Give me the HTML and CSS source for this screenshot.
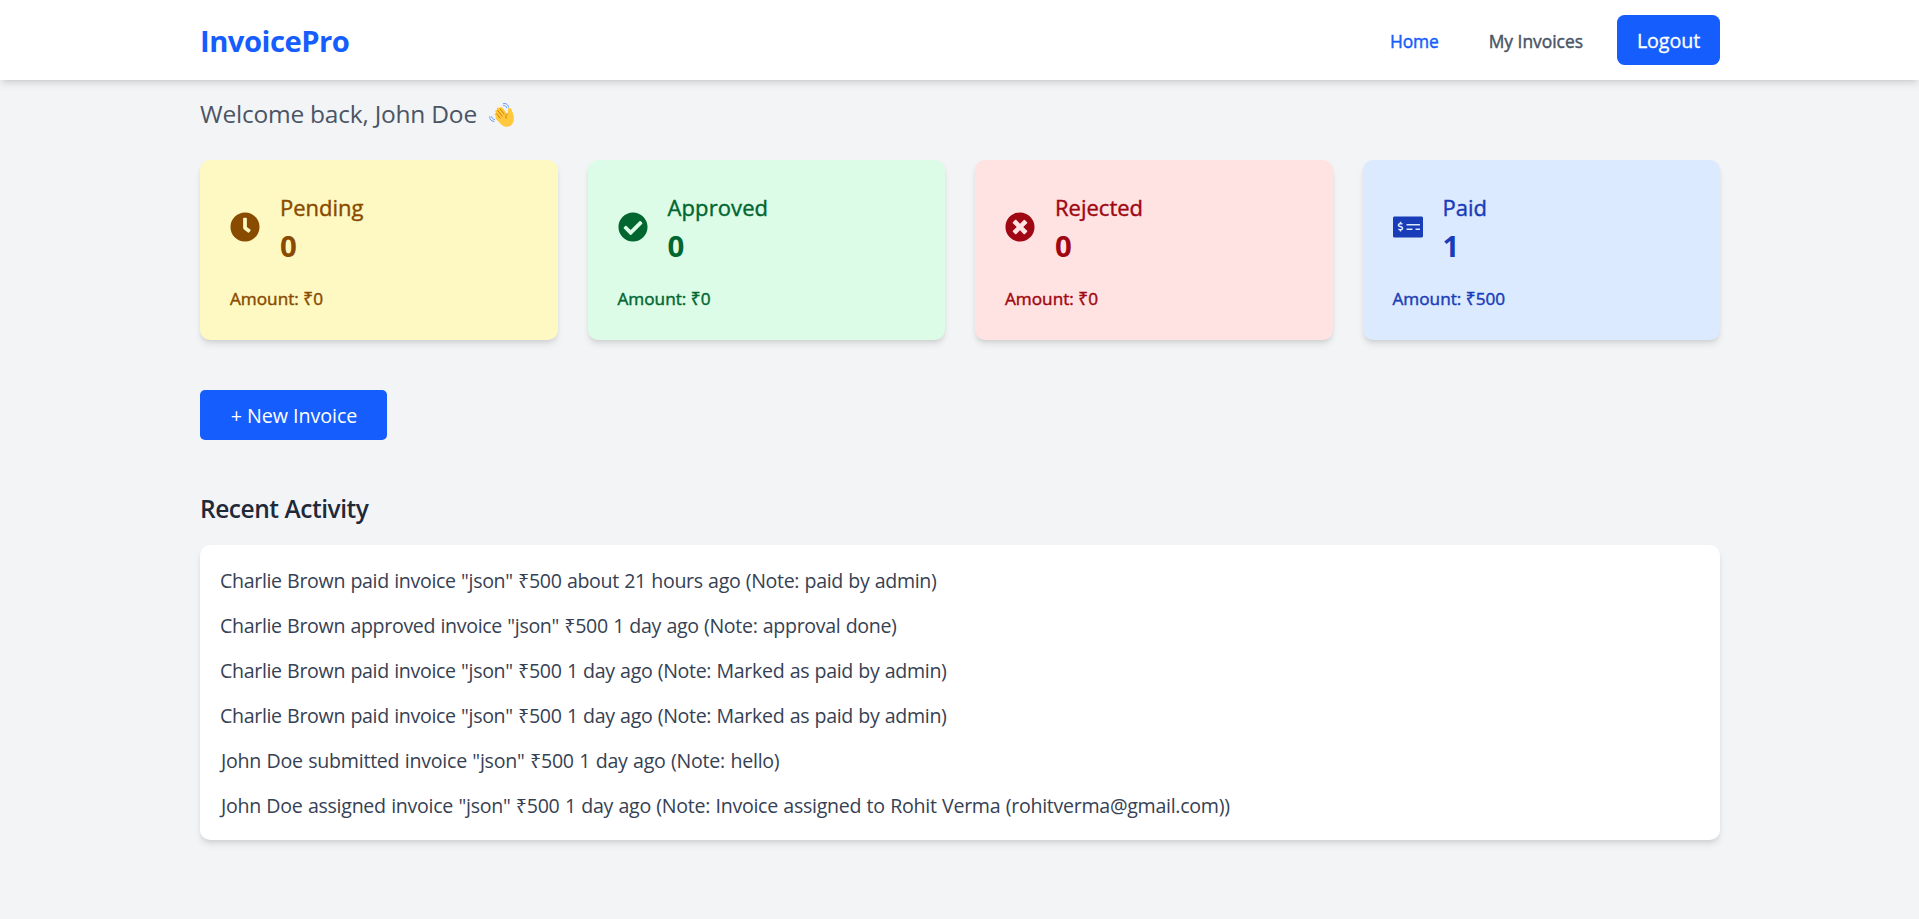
FILE: index.html
```html
<!DOCTYPE html>
<html lang="en">
<head>
<meta charset="utf-8">
<title>InvoicePro</title>
<link rel="stylesheet" href="styles.css">
</head>
<body>
<header class="topbar">
  <div class="container topbar-inner">
    <a class="logo">InvoicePro</a>
    <nav class="nav">
      <a class="nav-link active">Home</a>
      <a class="nav-link">My Invoices</a>
      <button class="logout">Logout</button>
    </nav>
  </div>
</header>
<main class="container">
  <p class="welcome"><span>Welcome back, John Doe</span>
    <svg class="wave" viewBox="0 0 25 25" aria-label="waving hand">
      <path fill="#ffc83d" d="M5.8 13.2c-.9-1.2.8-2.6 1.9-1.5L6.5 9.9c-.9-1.5 1-2.8 2.1-1.5L8 7.3c-.8-1.5 1.3-2.7 2.3-1.3l.7.8c-.6-1.6 1.5-2.6 2.5-1.1l4.7 6.2c.4.5.8.3.8-.3l-.1-3.7c0-2.3 3.1-2.5 3.7-.3.5 2 2 4.800 2.200 7.400C25.300 20.500 22.500 24.800 18 24.800c-2.700 0-4.700-1.200-6.500-3.100l-4.700-4.900c-1.200-1.300.1-2.600 1.300-1.600z"/>
      <path fill="none" stroke="#d67d00" stroke-width="1" stroke-linecap="round" d="M7.700 11.800l3.400 4.300M8.800 8.600l4.300 5.500M11 6.800l4.200 5.200M18.600 11.700c-1.600 1.300-2.200 2.700-1.500 4.600"/>
      <path fill="none" stroke="#5092ff" stroke-width=".9" stroke-linecap="round" d="M14.300 1.700c2.600-.9 5 .8 5.300 3.500M14.600 3.600c1.500-.4 2.800.5 3.100 2.200M.7 14.600c-.3 2.800 1.500 4.800 4.300 4.800M2.800 14.700c.1 1.700 1.100 2.700 2.700 2.900"/>
    </svg>
  </p>

  <section class="cards">
    <article class="card pending">
      <div class="card-head">
        <svg class="card-icon" viewBox="0 0 512 512"><path fill="currentColor" d="M256 8C119 8 8 119 8 256s111 248 248 248 248-111 248-248S393 8 256 8zm92.490 313l-20 25a16 16 0 0 1-22.490 2.500l-67-49.720a40 40 0 0 1-15-31.230V112a16 16 0 0 1 16-16h32a16 16 0 0 1 16 16v144l58 42.500a16 16 0 0 1 2.490 22.500z"/></svg>
        <div><h3 class="card-title">Pending</h3><p class="card-count">0</p></div>
      </div>
      <p class="card-amount">Amount: ₹0</p>
    </article>
    <article class="card approved">
      <div class="card-head">
        <svg class="card-icon" viewBox="0 0 512 512"><path fill="currentColor" d="M504 256c0 136.967-111.033 248-248 248S8 392.967 8 256 119.033 8 256 8s248 111.033 248 248zM227.314 387.314l184-184c6.248-6.248 6.248-16.379 0-22.627l-22.627-22.627c-6.248-6.249-16.379-6.249-22.628 0L216 308.118l-70.059-70.059c-6.248-6.248-16.379-6.248-22.628 0l-22.627 22.627c-6.248 6.248-6.248 16.379 0 22.627l104 104c6.249 6.249 16.379 6.249 22.628.001z"/></svg>
        <div><h3 class="card-title">Approved</h3><p class="card-count">0</p></div>
      </div>
      <p class="card-amount">Amount: ₹0</p>
    </article>
    <article class="card rejected">
      <div class="card-head">
        <svg class="card-icon" viewBox="0 0 512 512"><path fill="currentColor" d="M256 8C119 8 8 119 8 256s111 248 248 248 248-111 248-248S393 8 256 8zm121.600 313.100c4.700 4.700 4.700 12.300 0 17L338 377.600c-4.700 4.700-12.300 4.700-17 0L256 312l-65.100 65.600c-4.700 4.700-12.300 4.700-17 0L134.400 338c-4.700-4.700-4.700-12.300 0-17l65.600-65-65.600-65.100c-4.700-4.700-4.700-12.300 0-17l39.600-39.600c4.700-4.700 12.300-4.700 17 0l65 65.700 65.100-65.600c4.700-4.700 12.300-4.700 17 0l39.600 39.600c4.700 4.700 4.700 12.300 0 17L312 256l65.600 65.100z"/></svg>
        <div><h3 class="card-title">Rejected</h3><p class="card-count">0</p></div>
      </div>
      <p class="card-amount">Amount: ₹0</p>
    </article>
    <article class="card paid">
      <div class="card-head">
        <svg class="card-icon" viewBox="0 0 640 512"><path fill="currentColor" d="M608 32H32C14.330 32 0 46.330 0 64v384c0 17.670 14.330 32 32 32h576c17.670 0 32-14.330 32-32V64c0-17.670-14.330-32-32-32zM176 327.880V344c0 4.420-3.580 8-8 8h-16c-4.420 0-8-3.580-8-8v-16.290c-11.290-.58-22.270-4.520-31.370-11.350-3.900-2.930-4.100-8.770-.57-12.140l11.750-11.210c2.770-2.640 6.890-2.760 10.130-.73 3.870 2.420 8.260 3.720 12.820 3.720h28.110c6.500 0 11.800-5.920 11.800-13.190 0-5.950-3.610-11.190-8.770-12.730l-45-13.500c-18.590-5.580-31.580-23.420-31.580-43.390 0-24.520 19.050-44.440 42.670-45.070V152c0-4.420 3.580-8 8-8h16c4.420 0 8 3.580 8 8v16.290c11.290.58 22.270 4.510 31.370 11.350 3.900 2.930 4.100 8.770.57 12.140l-11.750 11.210c-2.770 2.640-6.890 2.760-10.130.73-3.870-2.430-8.260-3.720-12.820-3.720h-28.110c-6.500 0-11.800 5.920-11.800 13.190 0 5.950 3.610 11.190 8.770 12.730l45 13.500c18.590 5.580 31.580 23.420 31.580 43.390 0 24.530-19.050 44.440-42.670 45.070zM416 312c0 4.420-3.580 8-8 8H296c-4.420 0-8-3.580-8-8v-16c0-4.420 3.580-8 8-8h112c4.420 0 8 3.580 8 8v16zm160 0c0 4.420-3.580 8-8 8h-80c-4.420 0-8-3.580-8-8v-16c0-4.420 3.580-8 8-8h80c4.420 0 8 3.580 8 8v16zm0-96c0 4.420-3.580 8-8 8H296c-4.420 0-8-3.580-8-8v-16c0-4.420 3.580-8 8-8h272c4.420 0 8 3.580 8 8v16z"/></svg>
        <div><h3 class="card-title">Paid</h3><p class="card-count">1</p></div>
      </div>
      <p class="card-amount">Amount: ₹500</p>
    </article>
  </section>

  <button class="new-invoice">+ New Invoice</button>

  <h2 class="section-title">Recent Activity</h2>
  <ul class="activity">
    <li>Charlie Brown paid invoice "json" ₹500 about 21 hours ago (Note: paid by admin)</li>
    <li>Charlie Brown approved invoice "json" ₹500 1 day ago (Note: approval done)</li>
    <li>Charlie Brown paid invoice "json" ₹500 1 day ago (Note: Marked as paid by admin)</li>
    <li>Charlie Brown paid invoice "json" ₹500 1 day ago (Note: Marked as paid by admin)</li>
    <li class="own">John Doe submitted invoice "json" ₹500 1 day ago (Note: hello)</li>
    <li class="own long">John Doe assigned invoice "json" ₹500 1 day ago (Note: Invoice assigned to Rohit Verma (rohitverma@gmail.com))</li>
  </ul>
</main>
</body>
</html>
```
FILE: styles.css
```css
* { box-sizing: border-box; margin: 0; padding: 0; }

body {
  min-height: 919px;
  background: #f3f4f6;
  font-family: "Segoe UI", "Open Sans", "Noto Sans", sans-serif;
  font-size: 19.6px;
  line-height: 30px;
  color: #364153;
}

.container { width: 1520px; margin: 0 199px 0 200px; }

/* Header */
.topbar {
  position: relative;
  background: #fff;
  box-shadow: 0 5px 7.5px -1.25px rgba(0, 0, 0, .1), 0 2.5px 5px -2.5px rgba(0, 0, 0, .1);
}
.topbar-inner {
  display: flex;
  align-items: center;
  justify-content: space-between;
  height: 80px;
}
.logo {
  padding-top: 2px;
  font-size: 29.2px;
  font-weight: 700;
  line-height: 45px;
  letter-spacing: -.5px;
  color: #155dfc;
}
.nav { display: flex; align-items: center; }
.nav-link {
  padding-top: 2px;
  margin-right: 34px;
  font-size: 17.4px;
  line-height: 25px;
  color: #4a5565;
  -webkit-text-stroke: .45px currentColor;
}
.nav-link.active { margin-right: 50px; letter-spacing: -.1px; color: #155dfc; }

button {
  border: 0;
  height: 50px;
  padding-top: 1px;
  font-family: inherit;
  font-size: 19.7px;
  line-height: 30px;
  color: #fff;
  background: #155dfc;
}
.logout { width: 103px; border-radius: 7.5px; letter-spacing: -.1px; -webkit-text-stroke: .3px currentColor; }

/* Greeting */
.welcome {
  display: flex;
  align-items: center;
  gap: 12px;
  margin: 15px 0 30px;
  height: 35px;
  font-size: 24.5px;
  letter-spacing: -.22px;
  color: #4a5565;
}
.welcome span { padding-top: 3px; }
.wave { width: 25px; height: 25px; margin-top: 3px; }

/* Status cards */
.cards { display: grid; grid-template-columns: repeat(4, 1fr); gap: 30px; }
.card {
  height: 180px;
  padding: 30px;
  border-radius: 10px;
  box-shadow: 0 5px 7.5px -1.25px rgba(0, 0, 0, .1), 0 2.5px 5px -2.5px rgba(0, 0, 0, .1);
}
.pending { background: #fef9c2; color: #894b00; }
.approved { background: #dcfce7; color: #016630; }
.rejected { background: #ffe2e2; color: #9f0712; }
.paid { background: #dbeafe; color: #193cb8; }

.card-head { display: flex; align-items: center; gap: 20px; height: 73px; }
.card-icon { width: 30px; height: 30px; }
.card-title {
  padding-top: 2px;
  font-size: 22px;
  font-weight: 400;
  line-height: 35px;
  -webkit-text-stroke: .4px currentColor;
}
.approved .card-title { letter-spacing: .1px; }
.card-count { padding-top: 2px; font-size: 29.4px; font-weight: 700; line-height: 39px; }
.card-amount {
  margin-top: 23px;
  padding-top: 1px;
  font-size: 17.2px;
  line-height: 24px;
  -webkit-text-stroke: .45px currentColor;
}

.new-invoice { display: block; width: 187px; margin-top: 50px; padding-left: 1px; border-radius: 5px; letter-spacing: -.05px; }

/* Activity feed */
.section-title {
  margin: 50px 0 20px;
  padding-top: 2px;
  font-size: 24.5px;
  font-weight: 600;
  line-height: 33px;
  letter-spacing: -.45px;
  color: #1e2939;
}
.activity {
  display: flex;
  flex-direction: column;
  gap: 15px;
  padding: 20px;
  list-style: none;
  background: #fff;
  border-radius: 10px;
  box-shadow: 0 5px 7.5px -1.25px rgba(0, 0, 0, .1), 0 2.5px 5px -2.5px rgba(0, 0, 0, .1);
}
.activity li { height: 30px; padding-top: 1px; letter-spacing: -.34px; word-spacing: .6px; }
.activity .own { padding-left: 1px; letter-spacing: -.25px; }
.activity .long { letter-spacing: -.285px; }
```
